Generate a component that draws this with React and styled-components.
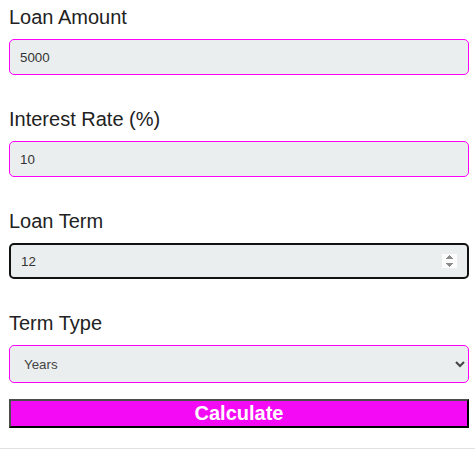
import React from "react";
import styled, { createGlobalStyle } from "styled-components";

const GlobalStyle = createGlobalStyle`
  * {
    box-sizing: border-box;
  }
  body {
    margin: 0;
    background: #fff;
    font-family: "Liberation Sans", Arial, sans-serif;
  }
`;

const Page = styled.div`
  border-bottom: 1px solid #e2e2e2;
  padding: 6px 6px 20px 9px;
`;

const Form = styled.form`
  display: flex;
  flex-direction: column;
`;

const Field = styled.div`
  display: flex;
  flex-direction: column;
  margin-bottom: ${(p) => p.$gap || 33}px;
`;

const Label = styled.label`
  font-size: 20px;
  line-height: 23px;
  color: #222;
  margin-bottom: 10px;
`;

const Input = styled.input`
  width: 100%;
  height: 36px;
  padding: 0 10px;
  font-family: "Liberation Sans", Arial, sans-serif;
  font-size: 13.33px;
  color: #333;
  background: #ebeeef;
  border: ${(p) => (p.$active ? "2px solid #111" : "1px solid #f0f")};
  border-radius: 5px;
  outline: none;

  &::-webkit-inner-spin-button,
  &::-webkit-outer-spin-button {
    -webkit-appearance: ${(p) => (p.$active ? "auto" : "none")};
    opacity: ${(p) => (p.$active ? 1 : 0)};
    margin: 0;
  }
`;

const Select = styled.select`
  width: 100%;
  height: 38px;
  padding: 0 10px;
  font-family: "Liberation Sans", Arial, sans-serif;
  font-size: 13.33px;
  color: #444;
  background: #ebeeef;
  border: 1px solid #f0f;
  border-radius: 5px;
  outline: none;
`;

const Button = styled.button`
  width: 100%;
  height: 29px;
  padding: 0;
  background: #f50af5;
  color: #fff;
  font-family: "Liberation Sans", Arial, sans-serif;
  font-size: 20px;
  font-weight: bold;
  line-height: 23px;
  border-style: solid;
  border-width: 2px;
  border-color: #4d4d4d #000 #000 #4d4d4d;
  cursor: pointer;
`;

export default function App() {
  return (
    <>
      <GlobalStyle />
      <Page>
        <Form onSubmit={(e) => e.preventDefault()}>
          <Field>
            <Label htmlFor="amount">Loan Amount</Label>
            <Input id="amount" type="number" defaultValue="5000" />
          </Field>
          <Field>
            <Label htmlFor="rate">Interest Rate (%)</Label>
            <Input id="rate" type="number" defaultValue="10" />
          </Field>
          <Field>
            <Label htmlFor="term">Loan Term</Label>
            <Input id="term" type="number" defaultValue="12" $active />
          </Field>
          <Field $gap={16}>
            <Label htmlFor="type">Term Type</Label>
            <Select id="type" defaultValue="years">
              <option value="years">Years</option>
              <option value="months">Months</option>
            </Select>
          </Field>
          <Button type="submit">Calculate</Button>
        </Form>
      </Page>
    </>
  );
}
